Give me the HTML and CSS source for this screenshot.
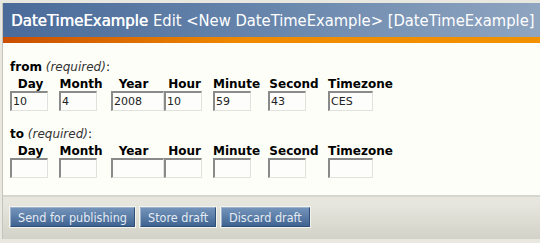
FILE: index.html
```html
<!DOCTYPE html>
<html lang="en">
<head>
<meta charset="UTF-8">
<title>DateTimeExample</title>
<link rel="stylesheet" href="styles.css">
</head>
<body>

<div class="panel">
  <div class="header">
    <span class="type">DateTimeExample</span>
    <span class="title">Edit &lt;New DateTimeExample&gt; [DateTimeExample]</span>
  </div>
  <div class="accent"></div>

  <div class="content">
    <div class="field">
      <div class="field-name"><b>from</b> <i>(required)</i>:</div>
      <div class="datetime">
        <span class="lbl">Day</span>
        <span class="lbl">Month</span>
        <span class="lbl">Year</span>
        <span class="lbl">Hour</span>
        <span class="lbl">Minute</span>
        <span class="lbl">Second</span>
        <span class="lbl">Timezone</span>
        <input type="text" class="in-2" value="10">
        <input type="text" class="in-2" value="4">
        <input type="text" class="in-4" value="2008">
        <input type="text" class="in-2" value="10">
        <input type="text" class="in-2" value="59">
        <input type="text" class="in-2" value="43">
        <input type="text" class="in-tz" value="CES">
      </div>
    </div>

    <div class="field">
      <div class="field-name"><b>to</b> <i>(required)</i>:</div>
      <div class="datetime">
        <span class="lbl">Day</span>
        <span class="lbl">Month</span>
        <span class="lbl">Year</span>
        <span class="lbl">Hour</span>
        <span class="lbl">Minute</span>
        <span class="lbl">Second</span>
        <span class="lbl">Timezone</span>
        <input type="text" class="in-2" value="">
        <input type="text" class="in-2" value="">
        <input type="text" class="in-4" value="">
        <input type="text" class="in-2" value="">
        <input type="text" class="in-2" value="">
        <input type="text" class="in-2" value="">
        <input type="text" class="in-tz" value="">
      </div>
    </div>
  </div>

  <div class="actions">
    <input type="button" class="btn" value="Send for publishing">
    <input type="button" class="btn" value="Store draft">
    <input type="button" class="btn" value="Discard draft">
  </div>
</div>

</body>
</html>
```

FILE: styles.css
```css
body {
  margin: 0;
  background-color: #e8e8e0;
  font-family: "DejaVu Sans", sans-serif;
  font-size: 12px;
  color: #000;
}
.panel {
  margin: 3px 0 0 2px;
  border-left: 1px solid #c4c4bc;
  height: 236px;
  background: linear-gradient(to bottom, #e6e6de 85%, #d2d2c8 100%);
}
.header {
  height: 34px;
  display: flex;
  align-items: center;
  gap: 5px;
  padding-left: 8px;
  white-space: nowrap;
  overflow: hidden;
  color: #fff;
  font-family: "DejaVu Sans Condensed", "DejaVu Sans", sans-serif;
  font-stretch: condensed;
  font-size: 16.6px;
  background: linear-gradient(to right, #4a6b9a 0%, #6886ac 50%, #8fa5c0 100%);
}
.header .type {
  text-shadow: 0.5px 0 0 #fff;
}
.header .title {
  font-size: 16.4px;
}
.accent {
  height: 6px;
  background: linear-gradient(to right, #c94f00 0%, #f08a00 45%, #f29200 100%);
}
.content {
  background-color: #fefef8;
  padding: 17px 0 17px 7px;
  border-bottom: 2px solid #d6d6ce;
}
.field + .field {
  margin-top: 16px;
}
.field-name {
  line-height: 14px;
}
.field-name i {
  color: #333;
}
.datetime {
  display: grid;
  grid-template-columns: 41px 44px 45px 41px 47px 52px 65px;
  column-gap: 8px;
  margin-top: 4px;
}
.lbl {
  font-weight: bold;
  text-align: center;
  line-height: 13px;
}
.datetime input {
  height: 20px;
  box-sizing: border-box;
  margin: 0;
  padding: 1px 1px;
  font-family: "DejaVu Sans", sans-serif;
  font-size: 11px;
  color: #222;
  background: #fdfdfb;
  border: 1px solid #e2e2dc;
  border-top: 2px solid #8a8a8a;
  border-left: 2px solid #8a8a8a;
}
.in-2 {
  width: 38px;
}
.in-4 {
  width: 53px;
}
.in-tz {
  width: 45px;
}
.actions {
  display: flex;
  gap: 5px;
  padding: 10px 0 0 7px;
}
.btn {
  height: 20px;
  padding: 0 7px;
  font-family: "DejaVu Sans Condensed", "DejaVu Sans", sans-serif;
  font-stretch: condensed;
  font-size: 12.5px;
  color: #e4ebf3;
  border: 1px solid #2f4f78;
  border-top-color: #9fb3cc;
  border-left-color: #9fb3cc;
  outline: 1px solid #f4f4ee;
  background: linear-gradient(to bottom, #7393ba 0%, #5a7ca6 50%, #3f6391 100%);
}
```
